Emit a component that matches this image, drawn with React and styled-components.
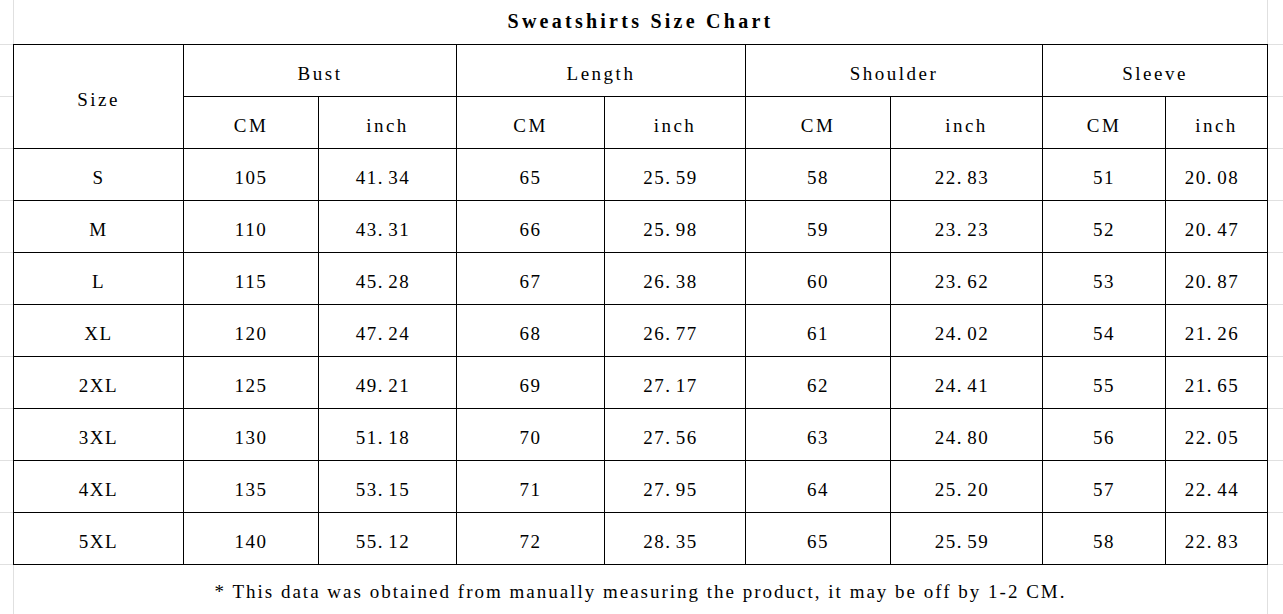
import React from "react";
import styled, { createGlobalStyle } from "styled-components";

const GlobalStyle = createGlobalStyle`
  html, body {
    margin: 0;
    padding: 0;
    background: #fff;
  }
  body {
    font-family: "Liberation Serif", "Times New Roman", serif;
    color: #000;
  }
`;

const GRID_LINE = "#e0e0e0";

const Sheet = styled.div`
  display: grid;
  grid-template-columns: 13px 171px 135px 138px 148px 141px 145px 152px 123px 102px 15px;
  grid-template-rows: 44px 53px repeat(9, 52px) 49px;
  width: 1283px;
  height: 614px;
  overflow: hidden;
`;

const Gutter = styled.div`
  box-sizing: border-box;
  border-top: ${(p) => (p.$top ? `1px solid ${GRID_LINE}` : "none")};
  border-bottom: ${(p) => (p.$line ? `1px solid ${GRID_LINE}` : "none")};
`;

const Banner = styled.div`
  grid-column: span 9;
  box-sizing: border-box;
  border-left: 1px solid ${GRID_LINE};
  border-right: 1px solid ${GRID_LINE};
  display: flex;
  align-items: center;
  justify-content: center;
`;

const Title = styled.h1`
  margin: 0;
  padding-bottom: 1px;
  font-size: 20px;
  font-weight: 700;
  letter-spacing: 3.25px;
`;

const Note = styled.p`
  margin: 0;
  padding-top: 5px;
  font-size: 19px;
  letter-spacing: 2px;
`;

const Cell = styled.div`
  box-sizing: border-box;
  grid-column: span ${(p) => p.$span || 1};
  grid-row: span ${(p) => p.$rows || 1};
  border-right: 1px solid #000;
  border-bottom: 1px solid #000;
  border-left: ${(p) => (p.$first ? "1px solid #000" : "none")};
  border-top: ${(p) => (p.$top ? "1px solid #000" : "none")};
  display: flex;
  align-items: center;
  justify-content: center;
  padding-top: 7px;
  padding-right: ${(p) => (p.$dec ? "9px" : "0")};
  font-size: 19px;
  letter-spacing: ${(p) => (p.$word ? "2.5px" : "1.5px")};
  white-space: nowrap;
`;

const Dot = styled.span`
  display: inline-block;
  width: 0.55em;
  text-align: left;
`;

const groups = ["Bust", "Length", "Shoulder", "Sleeve"];

const rows = [
  ["S", 105, "41.34", 65, "25.59", 58, "22.83", 51, "20.08"],
  ["M", 110, "43.31", 66, "25.98", 59, "23.23", 52, "20.47"],
  ["L", 115, "45.28", 67, "26.38", 60, "23.62", 53, "20.87"],
  ["XL", 120, "47.24", 68, "26.77", 61, "24.02", 54, "21.26"],
  ["2XL", 125, "49.21", 69, "27.17", 62, "24.41", 55, "21.65"],
  ["3XL", 130, "51.18", 70, "27.56", 63, "24.80", 56, "22.05"],
  ["4XL", 135, "53.15", 71, "27.95", 64, "25.20", 57, "22.44"],
  ["5XL", 140, "55.12", 72, "28.35", 65, "25.59", 58, "22.83"],
];

function Value({ v }) {
  const text = String(v);
  if (!text.includes(".")) return text;
  const [whole, frac] = text.split(".");
  return (
    <>
      {whole}
      <Dot>.</Dot>
      {frac}
    </>
  );
}

export default function App() {
  return (
    <>
      <GlobalStyle />
      <Sheet>
        <Gutter />
        <Banner>
          <Title>Sweatshirts Size Chart</Title>
        </Banner>
        <Gutter />

        <Gutter $top $line />
        <Cell $first $top $rows={2} $word>
          Size
        </Cell>
        {groups.map((g) => (
          <Cell key={g} $top $span={2} $word>
            {g}
          </Cell>
        ))}
        <Gutter $top $line />

        <Gutter $line />
        {groups.map((g) => (
          <React.Fragment key={g}>
            <Cell $word>CM</Cell>
            <Cell $word>inch</Cell>
          </React.Fragment>
        ))}
        <Gutter $line />

        {rows.map((row) => (
          <React.Fragment key={row[0]}>
            <Gutter $line />
            {row.map((v, i) => (
              <Cell key={i} $first={i === 0} $dec={String(v).includes(".")}>
                <Value v={v} />
              </Cell>
            ))}
            <Gutter $line />
          </React.Fragment>
        ))}

        <Gutter />
        <Banner>
          <Note>
            * This data was obtained from manually measuring the product, it may be off by 1-2 CM.
          </Note>
        </Banner>
        <Gutter />
      </Sheet>
    </>
  );
}
